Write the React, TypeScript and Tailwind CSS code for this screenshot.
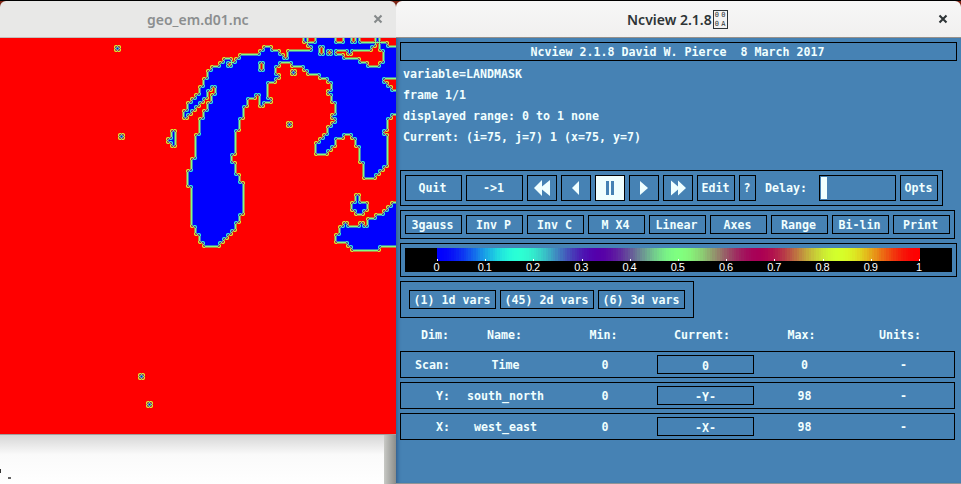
import React from "react";

/* ---------- land mask ---------- */

// Water spans for each grid row: row number -> [first, last] column pairs.
const WATER: Record<number, number[][]> = {
  10: [[76, 76], [79, 83], [86, 87], [89, 89], [94, 94]],
  11: [[77, 93], [95, 96]],
  12: [[29, 29], [66, 67], [78, 79], [81, 92], [95, 98]],
  13: [[65, 69], [72, 79], [81, 81], [83, 83], [87, 87], [96, 98]],
  14: [[60, 70], [72, 85], [96, 98]],
  15: [[56, 57], [59, 89], [96, 98]],
  16: [[55, 56], [58, 64], [66, 69], [73, 91], [95, 98]],
  17: [[53, 64], [66, 68], [76, 98]],
  18: [[52, 68], [73, 73], [77, 98]],
  19: [[52, 69], [80, 98]],
  20: [[51, 68], [82, 95]],
  21: [[51, 66], [83, 96]],
  22: [[50, 52], [54, 66], [83, 97]],
  23: [[50, 51], [54, 66], [82, 98]],
  24: [[49, 51], [53, 63], [65, 66], [83, 98]],
  25: [[48, 50], [53, 61], [65, 67], [83, 98]],
  26: [[47, 49], [52, 61], [65, 65], [84, 98]],
  27: [[47, 48], [52, 60], [84, 98]],
  28: [[46, 47], [51, 60], [84, 98]],
  29: [[46, 46], [51, 60], [83, 97]],
  30: [[50, 59], [84, 96]],
  31: [[50, 59], [72, 72], [83, 96]],
  32: [[50, 59], [82, 96]],
  33: [[43, 43], [50, 58], [82, 95]],
  34: [[30, 30], [43, 43], [49, 58], [81, 85], [88, 96]],
  35: [[42, 43], [49, 58], [80, 83], [89, 96]],
  36: [[43, 43], [49, 58], [79, 83], [89, 96]],
  37: [[49, 58], [79, 82], [90, 96]],
  38: [[49, 58], [79, 81], [90, 96]],
  39: [[49, 57], [90, 96]],
  40: [[48, 57], [90, 96]],
  41: [[48, 58], [91, 96]],
  42: [[48, 58], [91, 95]],
  43: [[47, 58], [91, 94]],
  44: [[47, 59], [91, 93]],
  45: [[47, 59]],
  46: [[47, 60]],
  47: [[48, 60]],
  48: [[48, 60]],
  49: [[48, 60], [89, 89]],
  50: [[48, 60], [89, 89]],
  51: [[48, 60], [88, 91], [98, 98]],
  52: [[48, 60], [88, 91], [97, 98]],
  53: [[48, 60], [89, 90], [96, 98]],
  54: [[48, 59], [94, 98]],
  55: [[48, 59], [92, 98]],
  56: [[48, 58], [86, 86], [90, 90], [92, 98]],
  57: [[49, 58], [85, 98]],
  58: [[49, 57], [85, 98]],
  59: [[50, 56], [84, 98]],
  60: [[50, 55], [84, 98]],
  61: [[51, 54], [87, 98]],
  62: [[88, 94]],
};

function land(col: number, row: number): number {
  const c = Math.min(98, Math.max(0, col));
  const spans = WATER[Math.max(10, row)];
  return spans && spans.some(([a, b]) => c >= a && c <= b) ? 0 : 1;
}

// The "3gauss" colour map.
function gauss3(t: number): string {
  const g = 0.5 - 0.5 * Math.cos(6 * Math.PI * t);
  return `rgb(${Math.round(255 * t)},${Math.round(255 * g)},${Math.round(255 * (1 - t))})`;
}

const MAP_TOP = 38;

// Bilinear interpolation at 4x magnification, gathered into one path per colour.
function mapPaths(): [string, string][] {
  const paths = new Map<number, string>();
  for (let y = MAP_TOP; y < 256; y++) {
    const r = Math.floor(y / 4);
    const fy = (y % 4) / 4;
    let start = 0;
    let prev = -1;
    for (let x = 0; x <= 396; x++) {
      let v = -2;
      if (x < 396) {
        const c = Math.floor((x - 1) / 4);
        const fx = (x - 1 - 4 * c) / 4;
        v = Math.round(
          16 *
            ((land(c, r) * (1 - fx) + land(c + 1, r) * fx) * (1 - fy) +
              (land(c, r + 1) * (1 - fx) + land(c + 1, r + 1) * fx) * fy),
        );
      }
      if (v !== prev) {
        if (prev >= 0 && prev < 16) {
          paths.set(prev, (paths.get(prev) ?? "") + `M${start} ${y - MAP_TOP}H${x}v1H${start}z`);
        }
        start = x;
        prev = v;
      }
    }
  }
  return [...paths].map(([v, d]) => [gauss3(v / 16), d]);
}

// A single water cell surrounded by land.
function Speck({ x, y }: { x: number; y: number }) {
  const cells = [];
  for (let j = -3; j <= 3; j++)
    for (let i = -3; i <= 3; i++) {
      const v = 1 - (1 - Math.abs(i) / 4) * (1 - Math.abs(j) / 4);
      cells.push(<rect key={`${i},${j}`} x={x + i} y={y + j - MAP_TOP} width="1" height="1" fill={gauss3(v)} />);
    }
  return <g>{cells}</g>;
}

function LandMask() {
  return (
    <svg width="396" height="396" viewBox="0 0 396 396" shapeRendering="crispEdges" className="block bg-[#ff0000]">
      {mapPaths().map(([fill, d]) => (
        <path key={fill} fill={fill} d={d} />
      ))}
      <Speck x={141} y={376} />
      <Speck x={149} y={404} />
    </svg>
  );
}

/* ---------- widgets ---------- */

function Btn({ className = "", children }: { className?: string; children?: React.ReactNode }) {
  return (
    <div className={`flex shrink-0 items-center justify-center whitespace-pre border border-black ${className}`}>
      {children}
    </div>
  );
}

function CloseX({ color }: { color: string }) {
  return (
    <svg width="10" height="10" viewBox="0 0 10 10" className="block">
      <path d="M1.5 1.5L8.5 8.5M8.5 1.5L1.5 8.5" stroke={color} strokeWidth="2.1" />
    </svg>
  );
}

function Glyph({ d }: { d: string }) {
  return (
    <svg width="28" height="24" viewBox="0 0 28 24" className="block">
      <path d={d} fill="#f0ffff" />
    </svg>
  );
}

function ColorBar() {
  const n = 200;
  return (
    <div className="h-6 w-[547px] bg-black">
      <svg width="547" height="24" viewBox="0 0 547 24" className="block">
        <g shapeRendering="crispEdges">
          {Array.from({ length: n }, (_, i) => (
            <rect key={i} x={32 + (483 * i) / n} y="0" width={483 / n + 0.5} height="13" fill={gauss3(i / (n - 1))} />
          ))}
          <rect x="515" y="0" width="32" height="13" fill="#000" />
          {Array.from({ length: 11 }, (_, i) => (
            <rect key={i} x={32 + Math.round(48.2 * i)} y="11" width="1" height="2" fill="#fff" />
          ))}
        </g>
        {["0", "0.1", "0.2", "0.3", "0.4", "0.5", "0.6", "0.7", "0.8", "0.9", "1"].map((t, i) => (
          <text
            key={t}
            x={31.25 + 48.25 * i}
            y="23"
            textAnchor="middle"
            fill="#fff"
            className="font-['Liberation_Sans',sans-serif] text-[11px] font-normal tracking-[-0.6px]"
          >
            {t}
          </text>
        ))}
      </svg>
    </div>
  );
}

function DimRow({ dim, name, min, cur, max }: { dim: string; name: string; min: string; cur: string; max: string }) {
  return (
    <div className="flex h-[27px] w-[555px] items-center border border-black">
      <div className="w-[49px] pt-[2px] text-right">{dim}</div>
      <div className="w-[111px] pt-[2px] text-center">{name}</div>
      <div className="w-[88px] pt-[2px] text-center">{min}</div>
      <Btn className="ml-2 h-[19px] w-[97px] pt-[3px]">{cur}</Btn>
      <div className="w-[101px] pt-[2px] text-center">{max}</div>
      <div className="w-[97px] pt-[2px] text-center">-</div>
    </div>
  );
}

function MapWindow() {
  return (
    <div className="flex h-[484px] w-[396px] flex-col overflow-hidden bg-white">
      <div className="bg-[#7d2414]">
        <div className="h-px bg-black" />
        <div className="flex h-[37px] items-center justify-between rounded-t-[6px] border-b border-[#c3c0bd] bg-[#e8e8e7] pl-[147px] pr-[13px]">
          <span className="font-['Noto_Sans',sans-serif] text-[14px] font-semibold text-[#8b8e8f]">geo_em.d01.nc</span>
          <CloseX color="#85898a" />
        </div>
      </div>
      <LandMask />
      <div className="flex h-[50px] border-t border-[#a0a0a0]">
        <div className="flex w-[384px] items-start bg-linear-to-b from-[#d6d6d6] via-[#fafafa] via-40% to-white pt-[34px]">
          <div className="h-1 w-px bg-[#333]" />
          <div className="ml-[7px] mt-2 h-[2px] w-[3px] bg-[#666]" />
        </div>
        <div className="w-3 bg-linear-to-r from-[#c8c9c5] to-[#8c8d8a]" />
      </div>
    </div>
  );
}

function ControlWindow() {
  return (
    <div className="flex h-[484px] w-[565px] flex-col bg-[#7d2414]">
      <div className="h-px bg-black" />
      <div className="flex h-[37px] items-center rounded-t-[6px] border-b border-[#96918c] bg-linear-to-b from-[#f7f7f7] to-[#f1f0ef] pl-[231px] pr-[13px]">
        <span className="font-['Noto_Sans',sans-serif] text-[14px] font-semibold text-[#2e3436]">Ncview 2.1.8</span>
        <span className="ml-px mt-px grid h-[19px] w-[15px] grid-cols-2 place-items-center border border-[#2e3436] font-['DejaVu_Sans_Mono',monospace] text-[7px] leading-[8px] text-[#2e3436]">
          <i className="not-italic">0</i>
          <i className="not-italic">0</i>
          <i className="not-italic">0</i>
          <i className="not-italic">A</i>
        </span>
        <span className="ml-auto">
          <CloseX color="#2e3436" />
        </span>
      </div>
      <div className="flex h-[446px] flex-col items-start gap-1 border-b border-[#8f9496] bg-[#4682b4] pl-1 pt-1 font-['DejaVu_Sans_Mono',monospace] text-[11.63px] font-bold leading-[13px] text-[#f0ffff] shadow-[inset_4px_0_4px_-3px_rgba(0,0,40,0.35)]">
        <Btn className="h-[19px] w-[557px] pr-[2px] pt-px">Ncview 2.1.8 David W. Pierce  8 March 2017</Btn>
        <div className="-mt-px mb-[19px] h-[83px] pl-[3px] leading-[21px]">
          <div>variable=LANDMASK</div>
          <div>frame 1/1</div>
          <div>displayed range: 0 to 1 none</div>
          <div>Current: (i=75, j=7) 1 (x=75, y=7)</div>
        </div>
        <div className="flex h-9 w-[543px] items-center gap-1 border border-black pl-1">
          <Btn className="h-[26px] w-[57px] pr-[2px]">Quit</Btn>
          <Btn className="h-[26px] w-[57px] pr-[2px]">{"->1"}</Btn>
          <Btn className="h-[26px] w-[30px]">
            <Glyph d="M6 12L14 4V10.5L22 4V20L14 13.500V20z" />
          </Btn>
          <Btn className="h-[26px] w-[30px]">
            <Glyph d="M10 12L17 5V19z" />
          </Btn>
          <Btn className="h-[26px] w-[30px] bg-[#f0ffff]">
            <div className="flex gap-[2px]">
              <div className="h-[14px] w-[3px] bg-[#4682b4]" />
              <div className="h-[14px] w-[3px] bg-[#4682b4]" />
            </div>
          </Btn>
          <Btn className="h-[26px] w-[30px]">
            <Glyph d="M18 12L10 5V19z" />
          </Btn>
          <Btn className="h-[26px] w-[30px]">
            <Glyph d="M22 12L14 4.500V10.500L7 4.500V19.500L14 13.500V19.500z" />
          </Btn>
          <Btn className="h-[26px] w-[38px] pr-px">Edit</Btn>
          <Btn className="h-[26px] w-[17px] pr-px">?</Btn>
          <div className="w-[55px] pl-[5px]">Delay:</div>
          <div className="h-[26px] w-[77px] border border-black py-px pl-px">
            <div className="h-[22px] w-[6px] bg-[#f0ffff]" />
          </div>
          <Btn className="h-[26px] w-[38px] pr-px">Opts</Btn>
        </div>
        <div className="flex h-[29px] w-[555px] items-center gap-1 border border-black pl-1">
          {["3gauss", "Inv P", "Inv C", "M X4", "Linear", "Axes", "Range", "Bi-lin", "Print"].map((t) => (
            <Btn key={t} className="h-[19px] w-[57px] pr-[2px] pt-px">
              {t}
            </Btn>
          ))}
        </div>
        <div className="h-[34px] w-[557px] border border-black p-1">
          <ColorBar />
        </div>
        <div className="flex h-[37px] w-[294px] items-center gap-1 border border-black pl-2">
          <Btn className="h-[19px] w-[87px] pr-px pt-px">(1) 1d vars</Btn>
          <Btn className="h-[19px] w-[94px] pr-px pt-px">(45) 2d vars</Btn>
          <Btn className="h-[19px] w-[87px] pr-px pt-px">(6) 3d vars</Btn>
        </div>
        <div className="flex h-[25px] items-center pt-[2px] text-center">
          <div className="w-[49px] text-right">Dim:</div>
          <div className="w-[111px]">Name:</div>
          <div className="w-[87px]">Min:</div>
          <div className="w-[110px]">Current:</div>
          <div className="w-[89px]">Max:</div>
          <div className="w-[108px]">Units:</div>
        </div>
        <DimRow dim="Scan:" name="Time" min="0" cur="0" max="0" />
        <DimRow dim="Y:" name="south_north" min="0" cur="-Y-" max="98" />
        <DimRow dim="X:" name="west_east" min="0" cur="-X-" max="98" />
      </div>
    </div>
  );
}

export default function App() {
  return (
    <div className="flex h-[484px] w-[961px] overflow-hidden bg-white">
      <MapWindow />
      <ControlWindow />
    </div>
  );
}
